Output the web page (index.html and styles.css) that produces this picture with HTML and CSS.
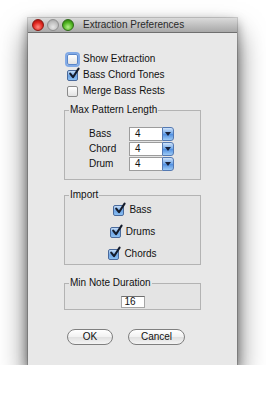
FILE: index.html
```html
<!DOCTYPE html>
<html>
  <head>
    <meta name="viewport" content="width=device-width, initial-scale=1.0">
    <title>Extraction Preferences</title>
    <link rel="stylesheet" href="styles.css">
  </head>
  <body>
    <div class="window">
      <div class="titlebar">
        <span class="light red"></span>
        <span class="light idle"></span>
        <span class="light green"></span>
        <span class="title">Extraction Preferences</span>
      </div>
      <div class="content">
        <div class="options">
          <label class="check"><span class="box focus"></span>Show Extraction</label>
          <label class="check"><span class="box on"><svg viewBox="0 0 12 12"><path d="M2.2 5.6 L5 9.2 L10.6 0.6"/></svg></span>Bass Chord Tones</label>
          <label class="check"><span class="box"></span>Merge Bass Rests</label>
        </div>

        <fieldset class="group pattern">
          <legend>Max Pattern Length</legend>
          <div class="groupBody">
            <div class="row"><span class="lbl">Bass</span><span class="combo"><span class="val">4</span><span class="arrow"></span></span></div>
            <div class="row"><span class="lbl">Chord</span><span class="combo"><span class="val">4</span><span class="arrow"></span></span></div>
            <div class="row"><span class="lbl">Drum</span><span class="combo"><span class="val">4</span><span class="arrow"></span></span></div>
          </div>
        </fieldset>

        <fieldset class="group import">
          <legend>Import</legend>
          <div class="groupBody">
            <label class="check"><span class="box on"><svg viewBox="0 0 12 12"><path d="M2.2 5.6 L5 9.2 L10.6 0.6"/></svg></span>Bass</label>
            <label class="check"><span class="box on"><svg viewBox="0 0 12 12"><path d="M2.2 5.6 L5 9.2 L10.6 0.6"/></svg></span>Drums</label>
            <label class="check"><span class="box on"><svg viewBox="0 0 12 12"><path d="M2.2 5.6 L5 9.2 L10.6 0.6"/></svg></span>Chords</label>
          </div>
        </fieldset>

        <fieldset class="group duration">
          <legend>Min Note Duration</legend>
          <div class="groupBody">
            <span class="field">16</span>
          </div>
        </fieldset>

        <div class="buttons">
          <span class="btn ok">OK</span>
          <span class="btn cancel">Cancel</span>
        </div>
      </div>
    </div>
  </body>
</html>
```

FILE: styles.css
```css
html {
  background-color: #fff;
}
body {
  margin: 0;
  padding: 18px 0 0 28px;
  font-family: 'Liberation Sans', Arial, sans-serif;
  font-size: 10px;
  color: #111;
}
.window {
  width: 209px;
  height: 347px;
  background-color: #e8e8e8;
  box-shadow: 0 0 0 1px rgba(0, 0, 0, .16), 0 4px 10px rgba(0, 0, 0, .4), 0 16px 26px rgba(0, 0, 0, .6);
}
.titlebar {
  display: flex;
  align-items: center;
  height: 14px;
  padding: 0 0 0 4px;
  background: linear-gradient(#dadada, #a8a8a8);
  border-bottom: 1px solid #6f6f6f;
}
.light {
  width: 12px;
  height: 12px;
  border-radius: 50%;
  margin-right: 3px;
  box-sizing: border-box;
}
.light.red {
  background: radial-gradient(circle at 50% 70%, #ff8a80 0, #e0241c 55%, #8c0d08 100%);
  border: 1px solid #8a1a14;
}
.light.idle {
  background: radial-gradient(circle at 50% 70%, #e6e6e6 0, #bdbdbd 60%, #9a9a9a 100%);
  border: 1px solid #8f8f8f;
}
.light.green {
  background: radial-gradient(circle at 50% 70%, #b4f08a 0, #4db21e 55%, #23690b 100%);
  border: 1px solid #2f6b18;
}
.title {
  margin-left: 6px;
  color: #2a2a2a;
  line-height: 14px;
}
.content {
  padding: 18px 0 0 0;
}
.options {
  padding-left: 39px;
}
.check {
  display: flex;
  align-items: center;
  height: 16px;
  line-height: 16px;
  white-space: nowrap;
}
.box {
  position: relative;
  width: 11px;
  height: 11px;
  margin-right: 5px;
  box-sizing: border-box;
  border: 1px solid #8a8a8a;
  border-radius: 2px;
  background: linear-gradient(#ffffff, #e2e2e2);
}
.box.focus {
  border-color: #5a86c8;
  box-shadow: 0 0 0 2px rgba(96, 150, 230, .75);
}
.box.on {
  border-color: #4a6a9c;
  background: linear-gradient(#c6def8, #6fa6e6 55%, #8cc0f2);
}
.box svg {
  position: absolute;
  left: 0;
  top: -3px;
  width: 12px;
  height: 12px;
  overflow: visible;
}
.box svg path {
  fill: none;
  stroke: #141c2c;
  stroke-width: 2.1;
  stroke-linecap: round;
  stroke-linejoin: round;
}
.group {
  margin: 0 36px 0 36px;
  padding: 0;
  border: 1px solid #b3b3b3;
  background-color: #e4e4e4;
  min-width: 0;
}
.group legend {
  margin-left: 4px;
  padding: 0 1px;
  line-height: 12px;
  color: #111;
}
.pattern {
  margin-top: 5px;
}
.pattern .groupBody {
  padding: 10px 0 8px 24px;
}
.row {
  display: flex;
  align-items: center;
  height: 15px;
}
.lbl {
  width: 40px;
}
.combo {
  display: flex;
  width: 45px;
  height: 14px;
}
.combo .val {
  flex: 1;
  box-sizing: border-box;
  padding-left: 5px;
  background-color: #fff;
  border: 1px solid #9c9c9c;
  border-right: 0;
  line-height: 12px;
}
.combo .arrow {
  position: relative;
  width: 12px;
  border-radius: 0 3px 3px 0;
  border: 1px solid #5479b2;
  box-sizing: border-box;
  background: linear-gradient(#cfe3fa, #6aa3e8 50%, #4f8ee0 51%, #9dcaf5);
}
.combo .arrow:after {
  content: '';
  position: absolute;
  left: 2px;
  top: 4px;
  border-left: 3px solid transparent;
  border-right: 3px solid transparent;
  border-top: 4px solid #17213a;
}
.import {
  margin-top: 9px;
}
.import .groupBody {
  padding: 1px 0 2px 0;
  display: flex;
  flex-direction: column;
  align-items: center;
  gap: 6px;
}
.duration {
  margin-top: 12px;
}
.duration .groupBody {
  padding: 7px 0 1px 0;
  text-align: center;
}
.field {
  display: inline-block;
  width: 24px;
  height: 12px;
  box-sizing: border-box;
  padding-left: 3px;
  text-align: left;
  line-height: 10px;
  background-color: #fff;
  border: 1px solid #a6a6a6;
  border-top-color: #6e6e6e;
  vertical-align: top;
}
.buttons {
  display: flex;
  gap: 15px;
  margin: 19px 0 0 39px;
}
.btn {
  display: block;
  height: 16px;
  box-sizing: border-box;
  line-height: 14px;
  text-align: center;
  border: 1px solid #7f7f7f;
  border-radius: 8px;
  background: linear-gradient(#ffffff, #f1f1f1 50%, #e0e0e0 51%, #f4f4f4);
}
.btn.ok {
  width: 46px;
}
.btn.cancel {
  width: 57px;
}
```
